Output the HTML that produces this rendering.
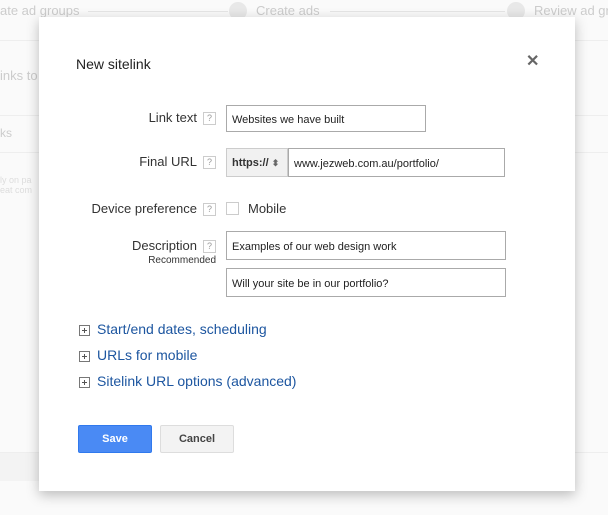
<!DOCTYPE html>
<html><head><style>
body{margin:0;width:608px;height:515px;background:#fafafa;font-family:"Liberation Sans",Arial,sans-serif;position:relative;overflow:hidden}
.a{position:absolute}
.bg{color:#ccc}
.dlg{position:absolute;left:39px;top:17px;width:536px;height:474px;background:#fff;box-shadow:0 4px 12px rgba(0,0,0,.25)}
.lbl{position:absolute;font-size:13px;color:#333;text-align:right;right:0}
.q{display:inline-block;width:11px;height:11px;border:1px solid #ccc;font-size:9px;color:#999;text-align:center;line-height:11px;vertical-align:middle;margin-left:6px}
.inp{position:absolute;border:1px solid #aaa;height:27px;box-sizing:border-box;font-size:11px;padding-left:5px;color:#222;display:flex;align-items:center;padding-top:2px}
.lnk{position:absolute;left:40px;font-size:14px;color:#1d56a0}
.pl{position:absolute;left:40px;width:9px;height:9px;border:1px solid #777}
.pl:before{content:"";position:absolute;left:2px;top:4px;width:5px;height:1px;background:#555}
.pl:after{content:"";position:absolute;left:4px;top:2px;width:1px;height:5px;background:#555}
</style></head><body>
<div class="a bg" style="left:0;top:3px;font-size:13px">ate ad groups</div>
<div class="a" style="left:88px;top:11px;width:140px;height:1px;background:#e6e6e6"></div>
<div class="a" style="left:229px;top:2px;width:18px;height:18px;border-radius:50%;background:#e8e8e8"></div>
<div class="a bg" style="left:256px;top:3px;font-size:13px">Create ads</div>
<div class="a" style="left:330px;top:11px;width:175px;height:1px;background:#e6e6e6"></div>
<div class="a" style="left:507px;top:2px;width:18px;height:18px;border-radius:50%;background:#e8e8e8"></div>
<div class="a bg" style="left:534px;top:3px;font-size:13px;white-space:nowrap">Review ad groups</div>
<div class="a" style="left:0;top:40px;width:608px;height:1px;background:#eee"></div>
<div class="a bg" style="left:0;top:68px;font-size:13px">inks to</div>
<div class="a" style="left:0;top:115px;width:608px;height:1px;background:#eee"></div>
<div class="a bg" style="left:0;top:126px;font-size:12px">ks</div>
<div class="a" style="left:0;top:152px;width:608px;height:1px;background:#eee"></div>
<div class="a bg" style="left:0;top:175px;font-size:9px;color:#ddd">ly on pa<br>eat com</div>
<div class="a" style="left:0;top:452px;width:608px;height:1px;background:#eee"></div>
<div class="a" style="left:0;top:453px;width:40px;height:28px;background:#f3f3f3"></div>
<div class="dlg">
<div class="a" style="left:37px;top:39px;font-size:14px;color:#222">New sitelink</div>
<div class="a" style="left:487px;top:34px;font-size:16px;color:#666;font-weight:bold">✕</div>
<div class="a" style="left:0;top:93px;width:177px"><div class="lbl">Link text<span class="q">?</span></div></div>
<div class="inp" style="left:187px;top:88px;width:200px">Websites we have built</div>
<div class="a" style="left:0;top:137px;width:177px"><div class="lbl">Final URL<span class="q">?</span></div></div>
<div class="a" style="left:187px;top:131px;width:62px;height:29px;background:#f1f1f1;border:1px solid #ccc;box-sizing:border-box;font-size:11px;font-weight:bold;color:#333;line-height:28px;padding-left:5px">https:// <span style="font-size:9px;color:#666">⬍</span></div>
<div class="inp" style="left:249px;top:131px;width:217px;height:29px">www.jezweb.com.au/portfolio/</div>
<div class="a" style="left:0;top:184px;width:177px"><div class="lbl">Device preference<span class="q">?</span></div></div>
<div class="a" style="left:187px;top:185px;width:11px;height:11px;border:1px solid #ccc"></div>
<div class="a" style="left:209px;top:184px;font-size:13px;color:#333">Mobile</div>
<div class="a" style="left:0;top:221px;width:177px"><div class="lbl">Description<span class="q">?</span></div></div>
<div class="a" style="left:0;top:238px;width:177px"><div class="lbl" style="font-size:10px">Recommended</div></div>
<div class="inp" style="left:187px;top:214px;width:280px;height:29px">Examples of our web design work</div>
<div class="inp" style="left:187px;top:251px;width:280px;height:29px">Will your site be in our portfolio?</div>
<div class="pl" style="top:308px"></div><div class="lnk" style="left:58px;top:304px">Start/end dates, scheduling</div>
<div class="pl" style="top:334px"></div><div class="lnk" style="left:58px;top:330px">URLs for mobile</div>
<div class="pl" style="top:360px"></div><div class="lnk" style="left:58px;top:356px">Sitelink URL options (advanced)</div>
<div class="a" style="left:39px;top:408px;width:74px;height:28px;background:#4a8af4;border:1px solid #3079ed;box-sizing:border-box;border-radius:2px;color:#fff;font-size:11px;font-weight:bold;text-align:center;line-height:26px">Save</div>
<div class="a" style="left:121px;top:408px;width:74px;height:28px;background:#f3f3f3;border:1px solid #ddd;box-sizing:border-box;border-radius:2px;color:#444;font-size:11px;font-weight:bold;text-align:center;line-height:26px">Cancel</div>
</div>
</body></html>
